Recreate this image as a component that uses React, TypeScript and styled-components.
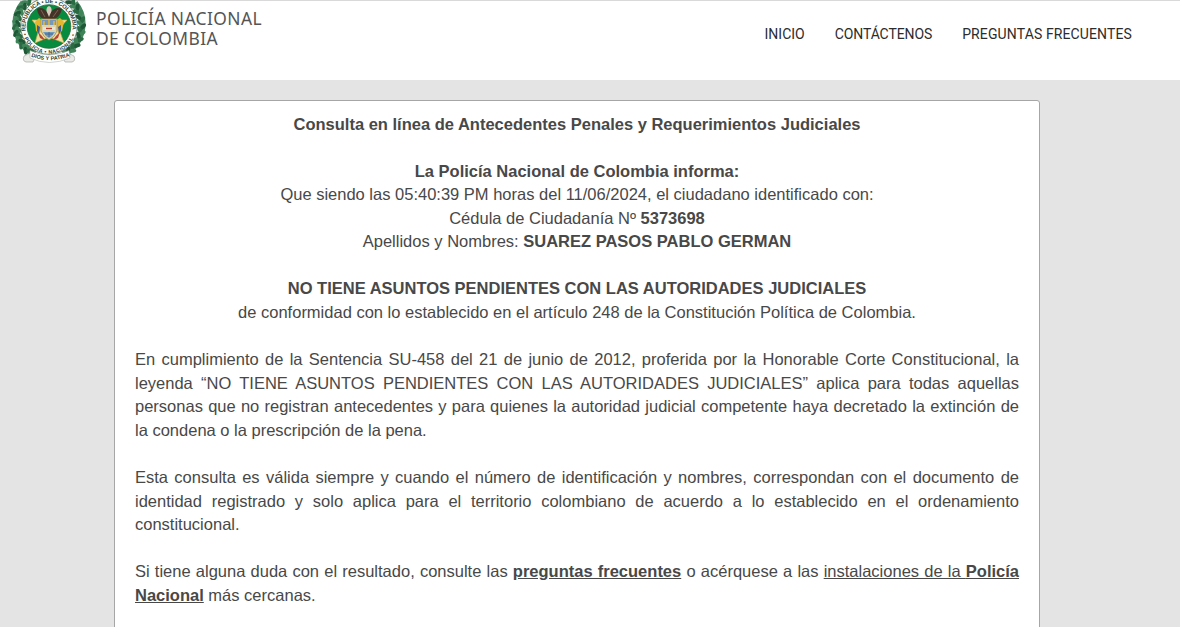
import React from "react";
import styled, { createGlobalStyle } from "styled-components";

const GlobalStyle = createGlobalStyle`
  * { box-sizing: border-box; }
  html, body { margin: 0; height: 627px; overflow: hidden; background: #e4e4e4; }
`;

const Page = styled.div`
  height: 627px;
  overflow: hidden;
  background: #e4e4e4;
  font-family: "Liberation Sans", Arial, sans-serif;
  color: #484848;
`;

const Header = styled.header`
  height: 80px;
  display: flex;
  justify-content: space-between;
  background: #fff;
  border-top: 1px solid #d9d9d9;
  padding: 0 48px 0 10px;
`;

const Brand = styled.div`
  display: flex;
  align-items: flex-start;
`;

const Emblem = styled.svg`
  display: block;
  width: 80px;
  height: 66px;
  margin-top: -1px;
  flex: none;
`;

const BrandName = styled.div`
  margin: 7px 0 0 6px;
  font: 400 17.4px/20px "Noto Sans", sans-serif;
  letter-spacing: 0.4px;
  white-space: nowrap;
  color: #555;
`;

const Nav = styled.nav`
  display: flex;
  gap: 30px;
  padding-top: 23px;
`;

const NavLink = styled.a<{ $spacing?: string }>`
  font: 400 14px/20px Roboto, sans-serif;
  letter-spacing: ${(p) => p.$spacing ?? "0"};
  color: #2c2c2c;
  white-space: nowrap;
`;

const Card = styled.main`
  width: 926px;
  height: 640px;
  margin: 20px 0 0 114px;
  padding: 11.515625px 20px;
  background: #fff;
  border: 1px solid #a6a6a6;
  border-radius: 3px;
  font-size: 16.5px;
  line-height: 23.5625px;
`;

const Block = styled.p<{ $center?: boolean }>`
  margin: 0 0 23.5625px;
  text-align: ${(p) => (p.$center ? "center" : "justify")};
`;

const TextLink = styled.a`
  text-decoration: underline;
`;

const leaves = Array.from({ length: 40 }, (_, i) => {
  const side = i < 20 ? -1 : 1;
  const deg = -50 + ((i % 20) / 19) * 108;
  const a = (deg * Math.PI) / 180;
  const r = i % 2 ? 34 : 31;
  return {
    x: 39 + side * Math.cos(a) * r,
    y: 26 + Math.sin(a) * r,
    r: side * deg + (i % 2 ? 40 : -35) + 90,
    c: ["#2a6b43", "#3f8459", "#1f5836"][i % 3],
  };
});

const Shield = () => (
  <Emblem viewBox="0 0 80 66" role="img" aria-label="Policía Nacional">
    <defs>
      <path id="ringTop" d="M15.9 31 A23.5 23.5 0 1 1 62.1 31" />
      <path id="ringBottom" d="M13 34 A27 27 0 0 0 65 34" />
      <path id="ribbon" d="M20 56 Q39 64.5 60 56" />
    </defs>
    <path d="M13 3 A33 33 0 0 0 25 54 M65 3 A33 33 0 0 1 53 54" fill="none" stroke="#4b8a62" strokeWidth="6" />
    {leaves.map((l, i) => (
      <ellipse key={i} cx={l.x} cy={l.y} rx="3.9" ry="2" fill={l.c} transform={`rotate(${l.r} ${l.x} ${l.y})`} />
    ))}
    <circle cx="39" cy="26" r="28.4" fill="#fbfcf9" stroke="#31563e" strokeWidth=".7" />
    <circle cx="39" cy="26.5" r="21.8" fill="#078b3e" stroke="#276b41" strokeWidth=".8" />
    <path d="M39 7L44 20L57 20L49 29L54 43L39 37L25 43L29 29L22 20L34 20Z" fill="#efe3a4" stroke="#c8aa43" strokeWidth=".7" />
    <path d="M38 13C34 8 31 7 27 9Q28 17 35 20H43Q50 17 52 9C48 7 44 8 40 13Z" fill="#443329" />
    <path d="M31 10L35 17M48 10L43 17" stroke="#7c6251" strokeWidth="1" />
    <path d="M39 6Q36 7 36.5 11L39 17L41.5 11Q42 7 39 6Z" fill="#d8cbbd" />
    <path d="M29 18L32 20L30 34L26 31L25 22Z" fill="#e3b62f" />
    <path d="M50 18L46 20L48 34L52 31L54 22Z" fill="#e3b62f" />
    <path d="M27 25L30 27L29 34L27 31Z M51 25L48 27L49 34L51 31Z" fill="#3c5f99" />
    <path d="M28 32L32 36L36 41L30 38Z M50 32L46 36L42 41L48 38Z" fill="#b9443a" />
    <path d="M31 19H47V31Q45 37 39 40Q33 37 31 31Z" fill="#ddd3ac" stroke="#a58d44" strokeWidth=".8" />
    <path d="M32 20H46V25H32Z" fill="#7598bb" />
    <path d="M34 21V25M44 21V25M39 20V25" stroke="#dfb33c" strokeWidth="1.7" />
    <path d="M33 27H45V30H33Z" fill="#e3e5d6" />
    <path d="M36 28.5H42" stroke="#b9392d" strokeWidth="1.4" />
    <path d="M33 32H45L42 36L39 38L36 36Z" fill="#6b9bc2" />
    <path d="M35 34H43M39 32V37" stroke="#49617e" strokeWidth=".9" />
    <path d="M20 53L14 56Q12 61 16 62L23 62L25 58Z M58 53L64 56Q66 61 62 62L55 62L53 58Z" fill="#eaeae7" stroke="#969b94" strokeWidth=".6" />
    <path d="M20 50.5Q39 59.5 59 50.5L60 58Q39 67 20 58Z" fill="#fff" stroke="#a1a69e" strokeWidth=".5" />
    <g fill="#293c2f" fontFamily="Liberation Sans, sans-serif" fontWeight="700" fontSize="5.8">
      <text><textPath href="#ringTop" textLength="81">REPUBLICA • DE • COLOMBIA</textPath></text>
      <text fontSize="5.2"><textPath href="#ringBottom" textLength="69">• POLICIA • NACIONAL •</textPath></text>
      <text fontSize="5.4"><textPath href="#ribbon" startOffset="1" textLength="40">DIOS Y PATRIA</textPath></text>
    </g>
  </Emblem>
);

export default function App() {
  return (
    <Page>
      <GlobalStyle />
      <Header>
        <Brand>
          <Shield />
          <BrandName>POLICÍA NACIONAL<br />DE COLOMBIA</BrandName>
        </Brand>
        <Nav>
          <NavLink>INICIO</NavLink>
          <NavLink $spacing="-0.1px">CONTÁCTENOS</NavLink>
          <NavLink $spacing="0.12px">PREGUNTAS FRECUENTES</NavLink>
        </Nav>
      </Header>
      <Card>
        <Block $center><b>Consulta en línea de Antecedentes Penales y Requerimientos Judiciales</b></Block>
        <Block $center>
          <b>La Policía Nacional de Colombia informa:</b><br />
          Que siendo las 05:40:39 PM horas del 11/06/2024, el ciudadano identificado con:<br />
          Cédula de Ciudadanía Nº <b>5373698</b><br />
          Apellidos y Nombres: <b>SUAREZ PASOS PABLO GERMAN</b>
        </Block>
        <Block $center>
          <b>NO TIENE ASUNTOS PENDIENTES CON LAS AUTORIDADES JUDICIALES</b><br />
          de conformidad con lo establecido en el artículo 248 de la Constitución Política de Colombia.
        </Block>
        <Block>
          En cumplimiento de la Sentencia SU-458 del 21 de junio de 2012, proferida por la Honorable Corte
          Constitucional, la leyenda “NO TIENE ASUNTOS PENDIENTES CON LAS AUTORIDADES JUDICIALES” aplica para
          todas aquellas personas que no registran antecedentes y para quienes la autoridad judicial competente
          haya decretado la extinción de la condena o la prescripción de la pena.
        </Block>
        <Block>
          Esta consulta es válida siempre y cuando el número de identificación y nombres, correspondan con el
          documento de identidad registrado y solo aplica para el territorio colombiano de acuerdo a lo
          establecido en el ordenamiento constitucional.
        </Block>
        <Block>
          Si tiene alguna duda con el resultado, consulte las <TextLink><b>preguntas frecuentes</b></TextLink> o
          acérquese a las <TextLink>instalaciones de la <b>Policía Nacional</b></TextLink> más cercanas.
        </Block>
      </Card>
    </Page>
  );
}
